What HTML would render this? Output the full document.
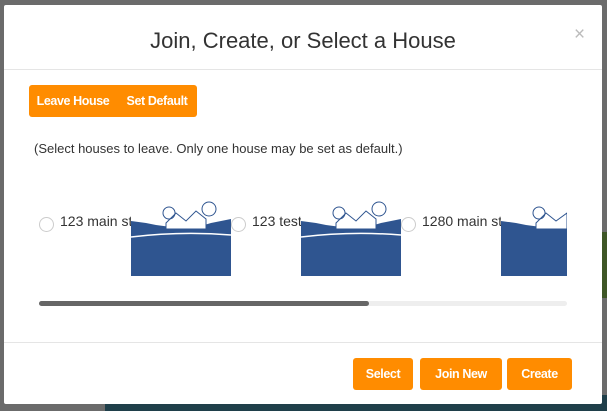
<!DOCTYPE html>
<html><head><style>
body{margin:0;width:607px;height:411px;overflow:hidden;background:#6b6b6b;font-family:"Liberation Sans",sans-serif;position:relative}
.bgb{position:absolute;left:105px;top:395px;width:502px;height:16px;background:#1f3f4a}
.bgg{position:absolute;left:602px;top:232px;width:5px;height:66px;background:#3e5626}
.modal{position:absolute;left:4px;top:5px;width:598px;height:399px;background:#fff;border-radius:2px}
h1{position:absolute;left:0;width:598px;top:23px;margin:0;text-align:center;font-weight:normal;font-size:22px;color:#333}
.x{position:absolute;left:570px;top:19px;color:#bbb;font-size:19px}
.hr{position:absolute;left:0;width:598px;height:1px;background:#e5e5e5}
.btn{position:absolute;background:#ff8c00;color:#fff;font-size:12.5px;font-weight:bold;height:32px;line-height:32px;text-align:center;border-radius:3px;letter-spacing:-0.4px;white-space:nowrap}
.note{position:absolute;left:30px;top:136px;font-size:13px;color:#333}
.r{position:absolute;top:212px;width:13px;height:13px;border:1px solid #ccc;border-radius:50%}
.lab{position:absolute;top:208px;font-size:14px;color:#333}
.img{position:absolute;top:196px;height:75px;overflow:hidden}
.track{position:absolute;left:35px;top:296px;width:528px;height:5px;background:#eee;border-radius:3px}
.thumb{position:absolute;left:35px;top:296px;width:330px;height:5px;background:#666;border-radius:3px}
</style></head><body>
<div class="bgb"></div><div class="bgg"></div>
<div class="modal">
<h1>Join, Create, or Select a House</h1>
<div class="x">×</div>
<div class="hr" style="top:64px"></div>
<div class="btn" style="left:25px;top:80px;width:88px;border-radius:3px 0 0 3px">Leave House</div>
<div class="btn" style="left:113px;top:80px;width:80px;border-radius:0 3px 3px 0">Set Default</div>
<div class="note">(Select houses to leave. Only one house may be set as default.)</div>

<div class="r" style="left:35px"></div><div class="lab" style="left:56px">123 main st</div>
<div class="r" style="left:227px"></div><div class="lab" style="left:248px">123 test</div>
<div class="r" style="left:397px"></div><div class="lab" style="left:418px">1280 main st</div>

<svg class="img" style="left:127px" width="100" height="75" viewBox="0 0 100 75"><rect x="0" y="0" width="100" height="75" fill="#fff"/><path d="M0 20 L15 22 L25 24 L40 26 L60 28 L80 22 L100 18 L100 75 L0 75Z" fill="#2f5590"/><path d="M35 22 L45 12 L55 20 L65 10 L75 18 L75 28 L35 28Z" fill="#fff" stroke="#2f5590" stroke-width="1"/><circle cx="38" cy="12" r="6" fill="none" stroke="#2f5590"/><circle cx="78" cy="8" r="7" fill="none" stroke="#2f5590"/><path d="M0 36 Q50 30 100 34" stroke="#fff" stroke-width="1.5" fill="none"/></svg>
<svg class="img" style="left:297px" width="100" height="75" viewBox="0 0 100 75"><rect x="0" y="0" width="100" height="75" fill="#fff"/><path d="M0 20 L15 22 L25 24 L40 26 L60 28 L80 22 L100 18 L100 75 L0 75Z" fill="#2f5590"/><path d="M35 22 L45 12 L55 20 L65 10 L75 18 L75 28 L35 28Z" fill="#fff" stroke="#2f5590" stroke-width="1"/><circle cx="38" cy="12" r="6" fill="none" stroke="#2f5590"/><circle cx="78" cy="8" r="7" fill="none" stroke="#2f5590"/><path d="M0 36 Q50 30 100 34" stroke="#fff" stroke-width="1.5" fill="none"/></svg>
<svg class="img" style="left:497px" width="66" height="75" viewBox="0 0 66 75"><rect x="0" y="0" width="66" height="75" fill="#fff"/><path d="M0 20 L15 22 L25 24 L40 26 L66 22 L66 75 L0 75Z" fill="#2f5590"/><path d="M35 22 L45 12 L55 20 L66 12 L66 28 L35 28Z" fill="#fff" stroke="#2f5590"/><circle cx="38" cy="12" r="6" fill="none" stroke="#2f5590"/></svg>

<div class="track"></div><div class="thumb"></div>
<div class="hr" style="top:337px"></div>
<div class="btn" style="left:349px;top:353px;width:60px">Select</div>
<div class="btn" style="left:416px;top:353px;width:82px">Join New</div>
<div class="btn" style="left:503px;top:353px;width:65px">Create</div>
</div>
</body></html>
